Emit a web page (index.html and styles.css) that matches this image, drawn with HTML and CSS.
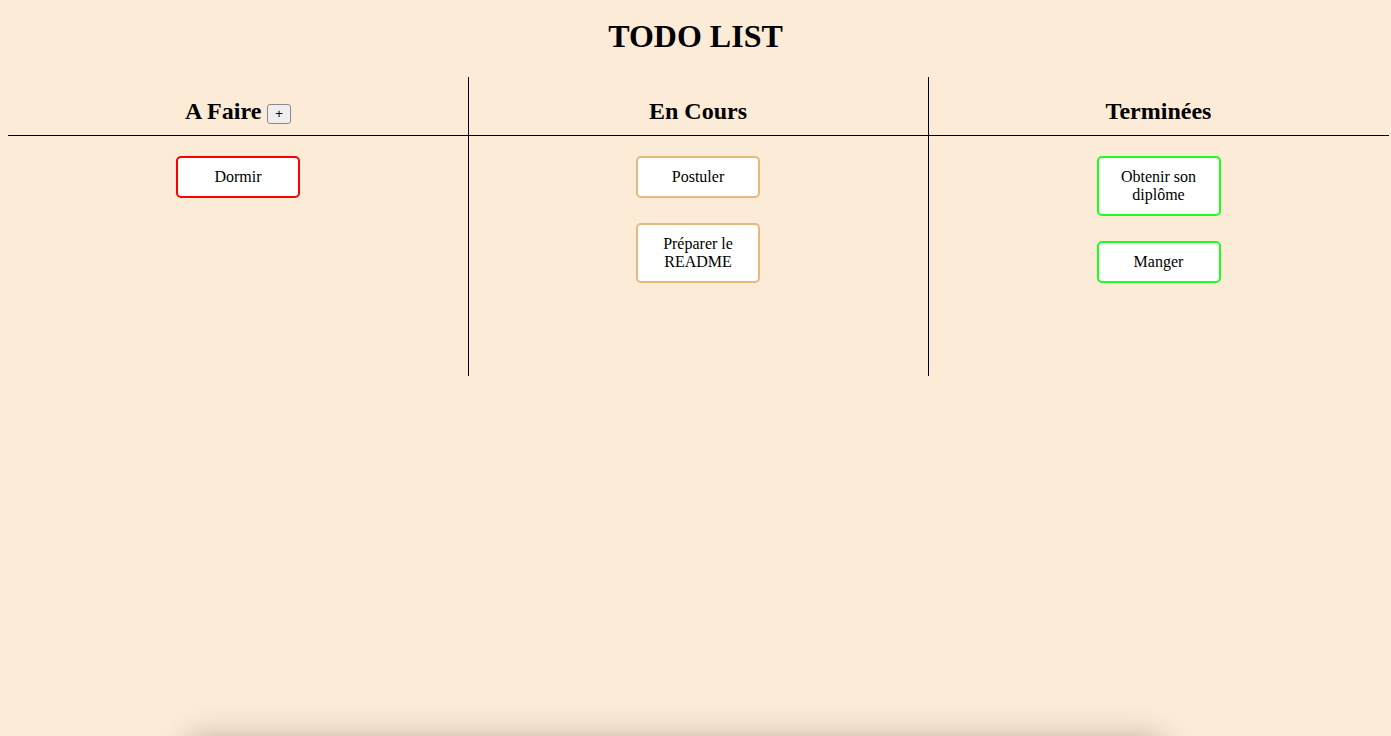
FILE: index.html
```html
<!DOCTYPE html>
<html lang="fr">
<head>
<meta charset="utf-8">
<title>TODO LIST</title>
<link rel="stylesheet" href="styles.css">
</head>
<body>
  <h1 class="title">TODO LIST</h1>
  <main class="board">
    <section class="column">
      <header class="column-head">
        <h2 class="column-title">A Faire <button class="add-btn" type="button">+</button></h2>
      </header>
      <div class="cards">
        <div class="card card-todo">Dormir</div>
      </div>
    </section>
    <section class="column">
      <header class="column-head">
        <h2 class="column-title">En Cours</h2>
      </header>
      <div class="cards">
        <div class="card card-doing">Postuler</div>
        <div class="card card-doing">Préparer le README</div>
      </div>
    </section>
    <section class="column">
      <header class="column-head">
        <h2 class="column-title">Terminées</h2>
      </header>
      <div class="cards">
        <div class="card card-done">Obtenir son diplôme</div>
        <div class="card card-done">Manger</div>
      </div>
    </section>
  </main>
  <div class="panel-shadow"></div>
</body>
</html>
```

FILE: styles.css
```css
html, body {
  background: #fcebd7;
}

body {
  margin: 0;
  padding: 8px;
  font-family: "Liberation Serif", "Times New Roman", serif;
  color: #000;
  overflow: hidden;
  height: 736px;
  box-sizing: border-box;
}

.title {
  margin: 10px 0 0;
  font-size: 32px;
  line-height: 37px;
  font-weight: bold;
  text-align: center;
}

.board {
  display: grid;
  grid-template-columns: 460px 460px 1fr;
  margin: 22px -6px 0 0;
}

.column {
  height: 299px;
  display: flex;
  flex-direction: column;
}

.column:not(:last-child) {
  border-right: 1px solid #000;
  margin-right: -1px;
}

.column-head {
  padding: 21px 0 10px;
  border-bottom: 1px solid #000;
}

.column-title {
  margin: 0;
  font-size: 24px;
  line-height: 27px;
  font-weight: bold;
  text-align: center;
}

.add-btn {
  font-family: "Liberation Sans", Arial, sans-serif;
  font-size: 13px;
  line-height: 16px;
  height: 20px;
  padding: 1px 7px;
  border: 1px solid #8a8a8a;
  border-radius: 3px;
  background: #efefef;
  color: #000;
  vertical-align: 1px;
}

.cards {
  display: flex;
  flex-direction: column;
  align-items: center;
  gap: 25px;
  padding-top: 20px;
}

.card {
  width: 100px;
  padding: 10px;
  background: #fff;
  border: 2px solid;
  border-radius: 5px;
  font-size: 16px;
  line-height: 18px;
  text-align: center;
}

.card-todo { border-color: #ff0000; }
.card-doing { border-color: #e5b97f; }
.card-done { border-color: #1cff1c; }

.panel-shadow {
  position: fixed;
  left: 195px;
  width: 960px;
  top: 745px;
  height: 200px;
  background: #fcebd7;
  box-shadow: 0 0 30px 6px rgba(0, 0, 0, 0.28);
}
```
